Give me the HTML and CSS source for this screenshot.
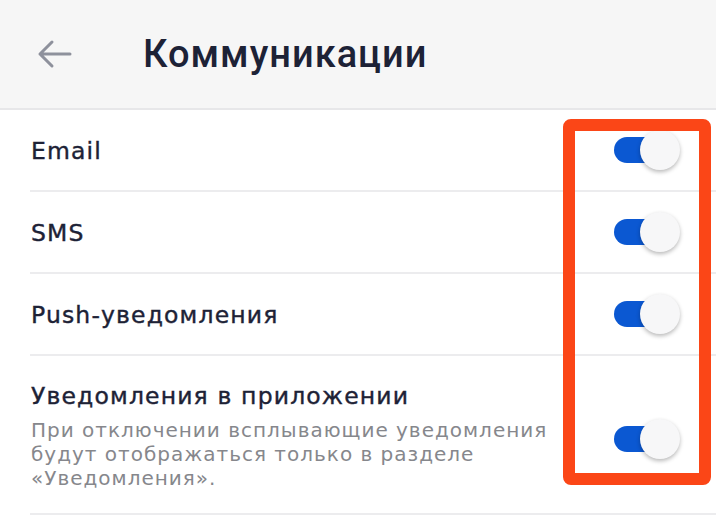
FILE: index.html
```html
<!DOCTYPE html>
<html lang="ru">
<head>
<meta charset="utf-8">
<link rel="stylesheet" href="styles.css">
</head>
<body>
<div class="screen">
  <header class="header">
    <svg class="back" width="36" height="30" viewBox="0 0 36 30">
      <path d="M34 15H4M16 3L4 15l12 12" fill="none" stroke="#8e919c" stroke-width="3" stroke-linecap="round" stroke-linejoin="round"/>
    </svg>
    <h1 class="title">Коммуникации</h1>
  </header>
  <div class="list">
    <div class="row">
      <div class="label">Email</div>
      <div class="toggle"><span class="track"></span><span class="knob"></span></div>
    </div>
    <div class="row">
      <div class="label">SMS</div>
      <div class="toggle"><span class="track"></span><span class="knob"></span></div>
    </div>
    <div class="row">
      <div class="label">Push-уведомления</div>
      <div class="toggle"><span class="track"></span><span class="knob"></span></div>
    </div>
    <div class="row tall">
      <div class="text">
        <div class="label">Уведомления в приложении</div>
        <div class="desc">При отключении всплывающие уведомления будут отображаться только в разделе «Уведомления».</div>
      </div>
      <div class="toggle"><span class="track"></span><span class="knob"></span></div>
    </div>
  </div>
  <div class="highlight"></div>
</div>
</body>
</html>
```
FILE: styles.css
```css
* { box-sizing: border-box; }
html, body { margin: 0; padding: 0; background: #ffffff; }
.screen {
  position: relative;
  width: 716px;
  height: 518px;
  overflow: hidden;
  font-family: "DejaVu Sans", Inter, sans-serif;
  color: #1d2236;
}
.header {
  height: 110px;
  background: #f6f6f6;
  border-bottom: 2px solid #e7e7e9;
  display: flex;
  align-items: center;
  padding-left: 36px;
}
.back { display: block; margin-top: 0; }
.title {
  margin: 0 0 0 71px;
  font-family: Roboto, "Noto Sans", sans-serif;
  font-weight: 500;
  font-size: 38px;
  letter-spacing: 1px;
  color: #1d2236;
  line-height: 1;
}
.list { padding-left: 30px; }
.row {
  height: 82px;
  border-bottom: 2px solid #ececee;
  display: flex;
  align-items: center;
  justify-content: space-between;
  padding-right: 36px;
}
.row .label { padding-top: 2px; }
.row.tall { height: 159px; align-items: flex-start; padding-top: 26px; }
.row.tall .toggle { margin-top: 37px; }
.row.tall .label { padding-top: 0; }
.label {
  padding-left: 1px;
  font-size: 23.5px;
  letter-spacing: 1.15px;
  font-weight: 400;
  -webkit-text-stroke: 0.4px #1d2236;
  color: #1d2236;
}
.text { width: 530px; }
.desc {
  padding-left: 1px;
  margin-top: 8px;
  font-size: 20px;
  line-height: 24px;
  letter-spacing: 1px;
  color: #86878c;
}
.toggle {
  position: relative;
  width: 66px;
  height: 40px;
  flex-shrink: 0;
}
.track {
  position: absolute;
  left: 0;
  top: 7px;
  width: 56px;
  height: 26px;
  border-radius: 13px;
  background: #0b58d2;
}
.knob {
  position: absolute;
  right: 0;
  top: 0;
  width: 40px;
  height: 40px;
  border-radius: 50%;
  background: #f7f7f8;
  box-shadow: 0 2px 4px rgba(0, 0, 0, 0.28);
}
.highlight {
  position: absolute;
  left: 563px;
  top: 119px;
  width: 148px;
  height: 366px;
  border: 12px solid #fb4617;
  border-radius: 8px;
}
```
